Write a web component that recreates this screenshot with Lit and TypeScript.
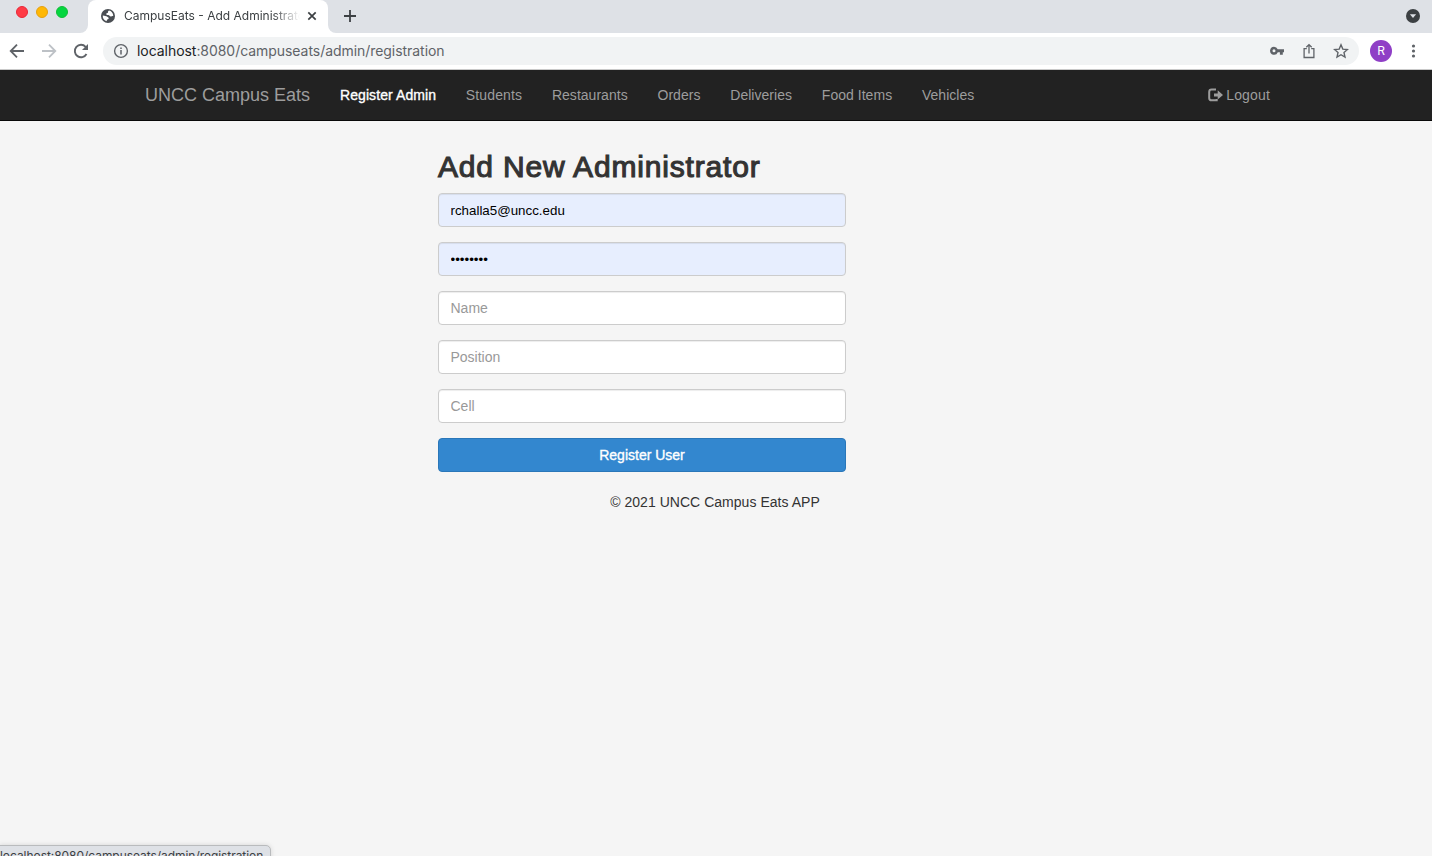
import { LitElement, html, css } from "lit";
import { customElement } from "lit/decorators.js";

@customElement("browser-chrome")
class BrowserChrome extends LitElement {
  static styles = css`
    :host { display: block; font-family: Inter, Roboto, sans-serif; color: #3c4043; }
    svg { display: block; flex: none; }
    .strip { display: flex; height: 33px; background: #dee1e6; }
    .lights { display: flex; gap: 8px; padding: 6px 0 0 16px; width: 72px; box-sizing: border-box; overflow: visible; }
    .light { flex: none; width: 12px; height: 12px; border-radius: 50%; box-sizing: border-box; border: 1px solid; }
    .red { background: #ff3b46; border-color: #e92738; }
    .amber { background: #ffb805; border-color: #e6a010; }
    .green { background: #05d640; border-color: #12bd38; }
    .foot { flex: none; width: 8px; height: 33px; background: #fff; }
    .foot::after { content: ""; display: block; height: 33px; background: #dee1e6; }
    .foot.left { margin-left: 8px; }
    .foot.left::after { border-bottom-right-radius: 8px; }
    .foot.right::after { border-bottom-left-radius: 8px; }
    .tab { display: flex; align-items: center; box-sizing: border-box; width: 240px; height: 33px; padding: 0 10px 1px 13px; background: #fff; border-radius: 8px 8px 0 0; }
    .title { width: 176px; margin: 0 6px 0 9px; overflow: hidden; white-space: nowrap; font-size: 12px; line-height: 16px; color: #3c4043; -webkit-mask-image: linear-gradient(90deg, #000 148px, transparent 176px); mask-image: linear-gradient(90deg, #000 148px, transparent 176px); }
    .plus { margin: 9px auto 0 7px; }
    .menu { margin: 9px 12px 0 0; }
    .bar { display: flex; align-items: center; height: 36px; background: #fff; border-bottom: 1px solid #c9c9c9; box-sizing: content-box; padding-left: 9px; }
    .back { margin-right: 16px; }
    .fwd { margin-right: 16px; }
    .address { display: flex; align-items: center; box-sizing: border-box; width: 1256px; height: 28px; margin-left: 14px; padding: 0 10px; border-radius: 14px; background: #f1f3f4; }
    .url { margin: 0 auto 0 8px; font-size: 14px; letter-spacing: -0.05px; line-height: 20px; color: #5f6368; white-space: nowrap; }
    .host { color: #202124; }
    .key { margin-right: 17px; }
    .share { margin-right: 16px; }
    .avatar { flex: none; width: 22px; height: 22px; margin-left: 11px; border-radius: 50%; background: #8f3fc6; color: #fff; font-size: 12px; line-height: 22px; text-align: center; }
    .dots { margin-left: 19px; }
  `;
  render() {
    return html`
      <div class="strip">
        <div class="lights"><i class="light red"></i><i class="light amber"></i><i class="light green"></i></div>
        <div class="foot left"></div>
        <div class="tab">
          <svg width="14" height="14" viewBox="0 0 14 14"><circle cx="7" cy="7" r="7" fill="#4a4e53"/><path d="M8 1.5C7 2.1 6.8 2.8 7 3.8L5.3 4.4C5 5.5 5.8 5.9 7.2 5.9C8.6 6 8.5 7.5 10 7.4L12.3 6.8C12.1 3.8 10.2 2 8 1.5Z M1.8 6.5C3.5 7.2 5.3 6.9 6 7.6C6.5 8.3 7.8 8.4 7.7 9.4C7.6 10.3 5.9 10 5.8 11.6L5.5 12.2C3 11.4 1.4 9 1.8 6.5Z" fill="#fff"/></svg>
          <div class="title">CampusEats - Add Administrator</div>
          <svg width="12" height="12" viewBox="0 0 12 12"><path d="M2.3 2.3L9.7 9.7M9.7 2.3L2.3 9.7" stroke="#3c4043" stroke-width="1.7"/></svg>
        </div>
        <div class="foot right"></div>
        <svg class="plus" width="14" height="14" viewBox="0 0 14 14"><path d="M7 1V13M1 7H13" stroke="#3c4043" stroke-width="1.8"/></svg>
        <svg class="menu" width="14" height="14" viewBox="0 0 14 14"><circle cx="7" cy="7" r="7" fill="#3c4043"/><path d="M3.9 5.2H10.1L7 9.1Z" fill="#dee1e6"/></svg>
      </div>
      <div class="bar">
        <svg class="back" width="16" height="16" viewBox="0 0 16 16"><path d="M15 8H2M8 1.7L1.7 8L8 14.3" fill="none" stroke="#5f6368" stroke-width="1.8"/></svg>
        <svg class="fwd" width="16" height="16" viewBox="0 0 16 16"><path d="M1 8H14M8 1.7L14.3 8L8 14.3" fill="none" stroke="#bdc1c6" stroke-width="1.8"/></svg>
        <svg width="16" height="16" viewBox="0 0 16 16"><path d="M13.5 11A6.2 6.2 0 1 1 12.6 3.8L14 5.2" fill="none" stroke="#5f6368" stroke-width="1.9"/><path d="M15 1V7H9Z" fill="#5f6368"/></svg>
        <div class="address">
          <svg width="16" height="16" viewBox="0 0 16 16"><circle cx="8" cy="8" r="6.4" fill="none" stroke="#5f6368" stroke-width="1.4"/><path d="M8 7.1V11.5M8 4.5V6" stroke="#5f6368" stroke-width="1.5"/></svg>
          <div class="url"><span class="host">localhost</span>:8080/campuseats/admin/registration</div>
          <svg class="key" width="14" height="10" viewBox="0 0 14 10"><path fill-rule="evenodd" d="M4 .8A4 4 0 0 1 7.7 3.3H14V6.2H12.8V8.7H9.9V6.2H7.8A4 4 0 1 1 4 .8ZM4 3.3A1.5 1.5 0 1 0 4 6.3A1.5 1.5 0 0 0 4 3.3Z" fill="#5f6368"/></svg>
          <svg class="share" width="16" height="16" viewBox="0 0 16 16"><path d="M5.8 5.7H3.1V14.5H12.9V5.7H10.2M8 10.5V1.8M5.3 4.3L8 1.6L10.7 4.3" fill="none" stroke="#5f6368" stroke-width="1.3"/></svg>
          <svg width="16" height="16" viewBox="0 0 16 16"><path d="M8 1.8L9.8 6.1L14.5 6.5L11 9.6L12 14.1L8 11.7L4 14.1L5 9.6L1.5 6.5L6.2 6.1Z" fill="none" stroke="#5f6368" stroke-width="1.4"/></svg>
        </div>
        <div class="avatar">R</div>
        <svg class="dots" width="5" height="16" viewBox="0 0 5 16"><g fill="#5f6368"><circle cx="2.5" cy="3" r="1.6"/><circle cx="2.5" cy="8" r="1.6"/><circle cx="2.5" cy="13" r="1.6"/></g></svg>
      </div>
    `;
  }
}

@customElement("site-nav")
class SiteNav extends LitElement {
  static styles = css`
    :host { display: block; background: #222; border-bottom: 1px solid #080808; }
    .inner { display: flex; align-items: center; box-sizing: border-box; height: 50px; width: 1170px; margin: 0 auto; padding: 0 31px 0 14px; color: #9d9d9d; font-size: 14px; line-height: 20px; white-space: nowrap; }
    .brand { width: 180px; font-size: 18px; }
    .links { display: flex; gap: 29.8px; margin: 0 auto 0 15px; padding: 0; list-style: none; letter-spacing: 0.03px; }
    .links li:nth-child(2) { letter-spacing: 0.12px; }
    .active { color: #fff; letter-spacing: 0.08px; -webkit-text-stroke: 0.35px #fff; }
    .logout { display: flex; align-items: center; gap: 3.5px; letter-spacing: 0.16px; }
  `;
  links = ["Register Admin", "Students", "Restaurants", "Orders", "Deliveries", "Food Items", "Vehicles"];
  render() {
    return html`
      <div class="inner">
        <div class="brand">UNCC Campus Eats</div>
        <ul class="links">${this.links.map((t, i) => html`<li class=${i === 0 ? "active" : ""}>${t}</li>`)}</ul>
        <div class="logout">
          <svg width="15" height="14" viewBox="0 0 15 14"><path d="M8 1.5H3.6Q1.2 1.5 1.2 3.9V9.9Q1.2 12.3 3.6 12.3H8.7V11" fill="none" stroke="#9d9d9d" stroke-width="2"/><path d="M9.7 2.3L15 6.9L9.7 11.5V8.4H6V5.4H9.7Z" fill="#9d9d9d"/></svg>
          <span>Logout</span>
        </div>
      </div>
    `;
  }
}

@customElement("app-root")
class AppRoot extends LitElement {
  static styles = css`
    :host { display: flex; flex-direction: column; height: 856px; position: relative; overflow: hidden; background: #f5f5f5; font-family: "Liberation Sans", Arial, sans-serif; color: #333; font-size: 14px; line-height: 20px; }
    .form { display: flex; flex-direction: column; gap: 15px; width: 408px; margin: 29px 0 0 438px; }
    .heading { margin: 0 0 -5px; font-size: 30px; line-height: 33px; font-weight: 400; letter-spacing: 0.83px; white-space: nowrap; -webkit-text-stroke: 1.1px #333; }
    .field { box-sizing: border-box; width: 100%; height: 34px; margin: 0; padding: 6px 11.5px; border: 1px solid #ccc; border-radius: 4px; background: #fff; box-shadow: inset 0 1px 1px rgba(0, 0, 0, 0.075); font: 14px/20px "Liberation Sans", Arial, sans-serif; color: #000; outline: none; }
    .field::placeholder { color: #999; opacity: 1; }
    .filled { background: #e7eefe; font-size: 13.33px; }
    .submit { height: 34px; padding: 0; border: 1px solid #2a77b9; border-radius: 4px; background: #3387cf; color: #fff; font: 14px/20px "Liberation Sans", Arial, sans-serif; -webkit-text-stroke: 0.35px #fff; }
    .footer { margin-top: 20px; padding-right: 2px; text-align: center; letter-spacing: 0.03px; }
    .status { position: absolute; left: -1px; top: 845px; height: 22px; width: 272px; box-sizing: border-box; border: 1px solid #b9bbbd; border-radius: 0 5px 0 0; background: #dee1e6; box-shadow: 0 0 5px rgba(0, 0, 0, 0.13); font: 12px/20px Inter, Roboto, sans-serif; letter-spacing: -0.05px; color: #3c4043; white-space: nowrap; }
  `;
  render() {
    return html`
      <browser-chrome></browser-chrome>
      <site-nav></site-nav>
      <div class="form">
        <h2 class="heading">Add New Administrator</h2>
        <input class="field filled" type="text" value="rchalla5@uncc.edu" />
        <input class="field filled" type="password" value="password" />
        <input class="field" placeholder="Name" />
        <input class="field" placeholder="Position" />
        <input class="field" placeholder="Cell" />
        <button class="submit">Register User</button>
      </div>
      <div class="footer">© 2021 UNCC Campus Eats APP</div>
      <div class="status">localhost:8080/campuseats/admin/registration</div>
    `;
  }
}
